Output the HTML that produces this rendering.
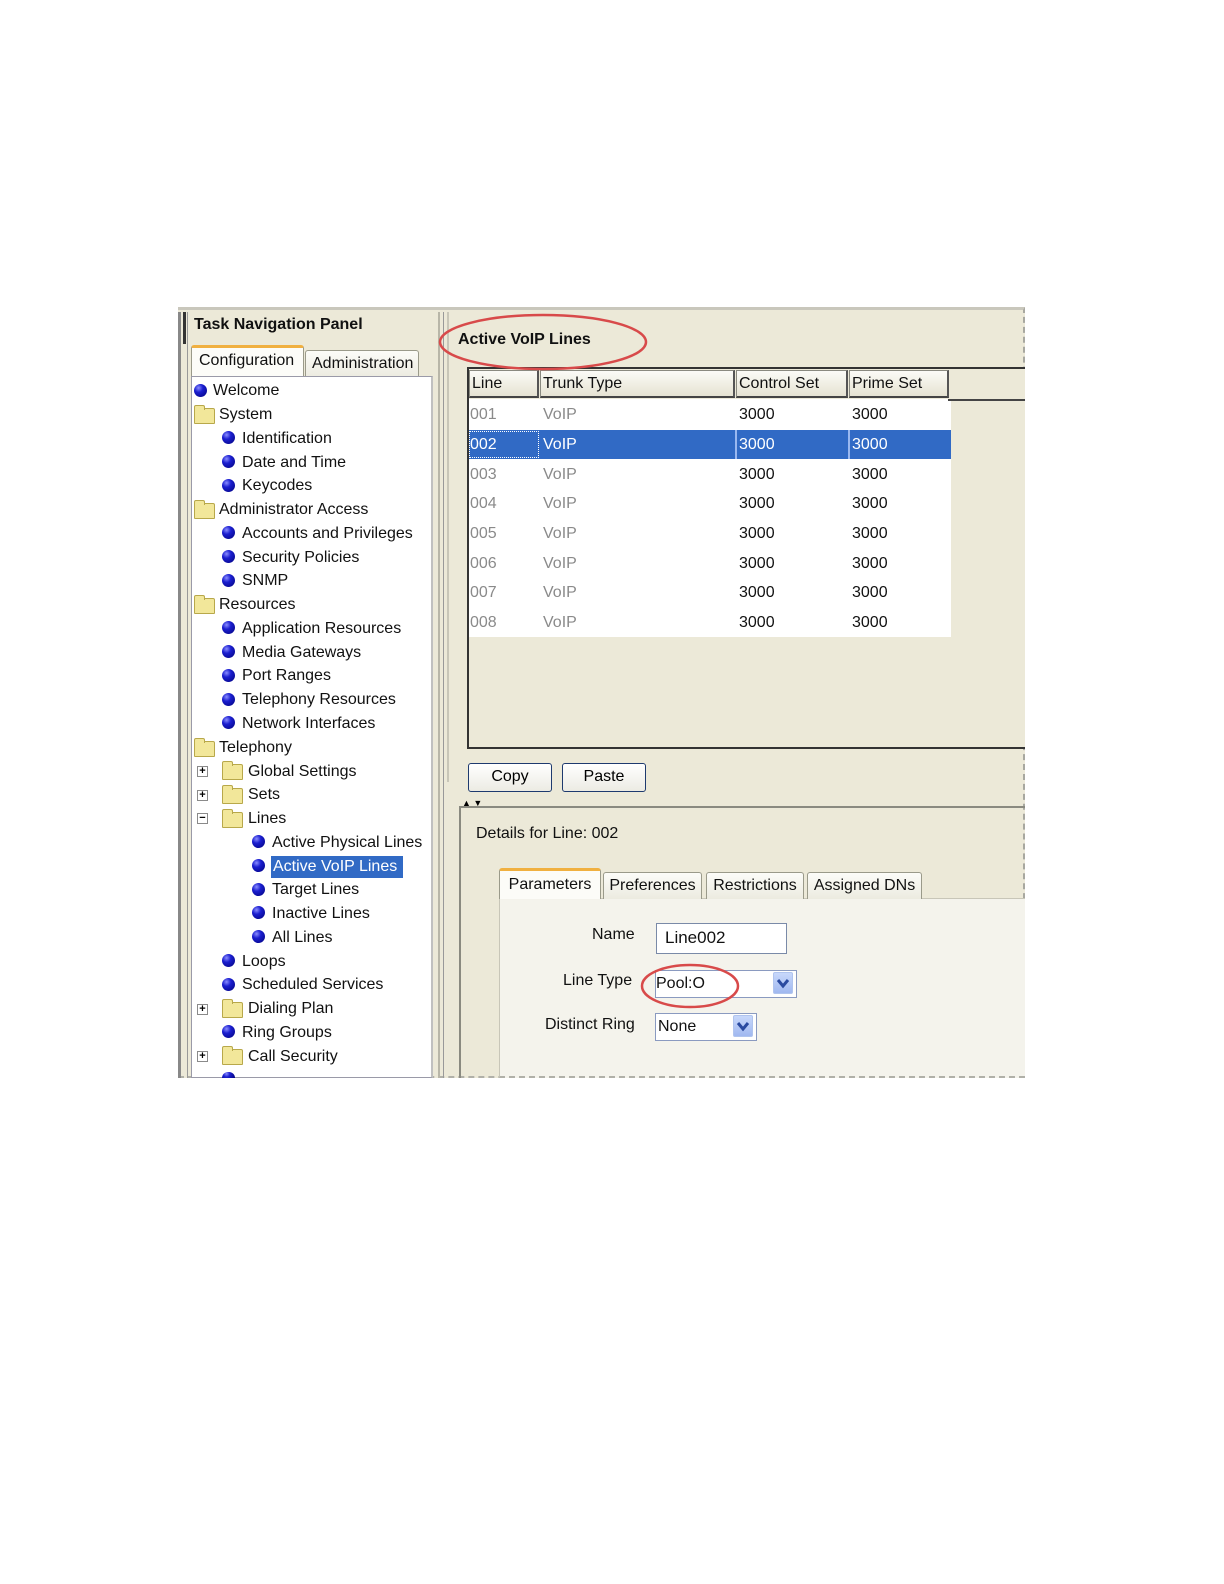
<!DOCTYPE html>
<html><head><meta charset="utf-8"><style>
*{margin:0;padding:0;box-sizing:border-box}
body{width:1224px;height:1584px;background:#fff;position:relative;font-family:"Liberation Sans",sans-serif;overflow:hidden}
.a{position:absolute}
.t{position:absolute;font-size:16px;line-height:20px;color:#111;white-space:nowrap}
.ball{position:absolute;width:13px;height:13px;border-radius:50%;background:radial-gradient(circle at 35% 30%,#8a8cff 0,#1b1fd0 35%,#00007a 100%)}
.fold{position:absolute;width:21px;height:16px;background:#f2e79a;border:1px solid #b8a84a;border-radius:2px 2px 1px 1px}
.fold:before{content:"";position:absolute;left:-1px;top:-4px;width:9px;height:4px;background:#f2e79a;border:1px solid #b8a84a;border-bottom:none;border-radius:2px 2px 0 0}
.pm{position:absolute;width:11px;height:11px;border:1px solid #8a8a8a;background:#fff;font-size:11px;line-height:8px;text-align:center;color:#000;font-weight:bold}
.hd{position:absolute;top:370px;height:28px;background:linear-gradient(#fbfbf7,#e6e3d2);border:1px solid #8a8a80;border-right:2px solid #555;border-bottom:2px solid #444;font-size:16px;line-height:26px;padding-left:2px;color:#111}
.cell{position:absolute;font-size:16px;line-height:20px;color:#111}
.g{color:#8a8a8a}
.tab{position:absolute;top:872px;height:27px;background:linear-gradient(#fcfcf8,#ecebe0);border:1px solid #9a9a8a;border-bottom:none;border-radius:3px 3px 0 0;font-size:16px;line-height:26px;text-align:center;color:#111}
.btn{position:absolute;top:763px;height:29px;border:1.5px solid #1e3a6e;border-radius:3px;background:linear-gradient(#fff,#ecebe3);font-size:16px;line-height:26px;text-align:center}
.dd{position:absolute;width:20px;height:22px;background:linear-gradient(#c8d8fb,#a0b8f0);border:1px solid #b0c4ee;border-radius:2px}
</style></head><body>
<div class="a" style="left:178px;top:307px;width:847px;height:771px;background:#ece9d8;border-top:3px solid #c9c7bc;border-right:2px dashed #a8a8a0;border-bottom:2px dashed #b0b0a8"></div>
<div class="a" style="left:178px;top:312px;width:3px;height:766px;background:#888"></div>
<div class="a" style="left:183px;top:312px;width:3px;height:32px;background:#333"></div>
<div class="a" style="left:187px;top:312px;width:1px;height:766px;background:#999"></div>
<div class="t" style="left:194px;top:315px;font-weight:bold;font-size:16px">Task Navigation Panel</div>
<div class="a" style="left:191px;top:345px;width:113px;height:32px;background:#fcfcf8;border:1px solid #9a9a8a;border-top:3px solid #f0b040;border-radius:3px 3px 0 0"></div>
<div class="t" style="left:199px;top:351px">Configuration</div>
<div class="a" style="left:305px;top:350px;width:114px;height:27px;background:linear-gradient(#fcfcf8,#ecebe0);border:1px solid #9a9a8a;border-bottom:none;border-radius:3px 3px 0 0"></div>
<div class="t" style="left:312px;top:354px">Administration</div>
<div class="a" style="left:191px;top:376px;width:242px;height:702px;background:#fff;border:1px solid #9a9aa8;border-right:2px solid #c0c0c0"></div>
<div class="a" style="left:438px;top:312px;width:2px;height:766px;background:#b8b6a8"></div>
<div class="a" style="left:443px;top:312px;width:1px;height:766px;background:#999"></div>

<div class="ball" style="left:194px;top:384px"></div><div class="t" style="left:213px;top:381px">Welcome</div>
<div class="fold" style="left:194px;top:408px"></div><div class="t" style="left:219px;top:405px">System</div>
<div class="ball" style="left:222px;top:431px"></div><div class="t" style="left:242px;top:429px">Identification</div>
<div class="ball" style="left:222px;top:455px"></div><div class="t" style="left:242px;top:453px">Date and Time</div>
<div class="ball" style="left:222px;top:479px"></div><div class="t" style="left:242px;top:476px">Keycodes</div>
<div class="fold" style="left:194px;top:503px"></div><div class="t" style="left:219px;top:500px">Administrator Access</div>
<div class="ball" style="left:222px;top:526px"></div><div class="t" style="left:242px;top:524px">Accounts and Privileges</div>
<div class="ball" style="left:222px;top:550px"></div><div class="t" style="left:242px;top:548px">Security Policies</div>
<div class="ball" style="left:222px;top:574px"></div><div class="t" style="left:242px;top:571px">SNMP</div>
<div class="fold" style="left:194px;top:598px"></div><div class="t" style="left:219px;top:595px">Resources</div>
<div class="ball" style="left:222px;top:621px"></div><div class="t" style="left:242px;top:619px">Application Resources</div>
<div class="ball" style="left:222px;top:645px"></div><div class="t" style="left:242px;top:643px">Media Gateways</div>
<div class="ball" style="left:222px;top:669px"></div><div class="t" style="left:242px;top:666px">Port Ranges</div>
<div class="ball" style="left:222px;top:693px"></div><div class="t" style="left:242px;top:690px">Telephony Resources</div>
<div class="ball" style="left:222px;top:716px"></div><div class="t" style="left:242px;top:714px">Network Interfaces</div>
<div class="fold" style="left:194px;top:741px"></div><div class="t" style="left:219px;top:738px">Telephony</div>
<div class="pm" style="left:197px;top:766px">+</div><div class="fold" style="left:222px;top:764px"></div><div class="t" style="left:248px;top:762px">Global Settings</div>
<div class="pm" style="left:197px;top:790px">+</div><div class="fold" style="left:222px;top:788px"></div><div class="t" style="left:248px;top:785px">Sets</div>
<div class="pm" style="left:197px;top:813px">−</div><div class="fold" style="left:222px;top:812px"></div><div class="t" style="left:248px;top:809px">Lines</div>
<div class="ball" style="left:252px;top:835px"></div><div class="t" style="left:272px;top:833px">Active Physical Lines</div>
<div class="ball" style="left:252px;top:859px"></div><div class="a" style="left:271px;top:856px;width:132px;height:22px;background:#316ac5"></div><div class="t" style="left:273px;top:857px;color:#fff">Active VoIP Lines</div>
<div class="ball" style="left:252px;top:883px"></div><div class="t" style="left:272px;top:880px">Target Lines</div>
<div class="ball" style="left:252px;top:906px"></div><div class="t" style="left:272px;top:904px">Inactive Lines</div>
<div class="ball" style="left:252px;top:930px"></div><div class="t" style="left:272px;top:928px">All Lines</div>
<div class="ball" style="left:222px;top:954px"></div><div class="t" style="left:242px;top:952px">Loops</div>
<div class="ball" style="left:222px;top:978px"></div><div class="t" style="left:242px;top:975px">Scheduled Services</div>
<div class="pm" style="left:197px;top:1004px">+</div><div class="fold" style="left:222px;top:1002px"></div><div class="t" style="left:248px;top:999px">Dialing Plan</div>
<div class="ball" style="left:222px;top:1025px"></div><div class="t" style="left:242px;top:1023px">Ring Groups</div>
<div class="pm" style="left:197px;top:1051px">+</div><div class="fold" style="left:222px;top:1049px"></div><div class="t" style="left:248px;top:1047px">Call Security</div>
<div class="ball" style="left:222px;top:1072px;height:6px;border-radius:7px 7px 0 0"></div>

<div class="a" style="left:447px;top:312px;width:2px;height:470px;background:#c8c6b8"></div>
<div class="t" style="left:458px;top:330px;font-weight:bold;font-size:16px">Active VoIP Lines</div>
<div class="a" style="left:467px;top:367px;width:558px;height:382px;border:2px solid #333;border-right:none;background:#ece9d8"></div>
<div class="a" style="left:469px;top:399px;width:482px;height:238px;background:#fff"></div>
<div class="a" style="left:948px;top:399px;width:77px;height:2px;background:#444"></div>
<div class="hd" style="left:469px;width:70px">Line</div>
<div class="hd" style="left:540px;width:195px">Trunk Type</div>
<div class="hd" style="left:736px;width:112px">Control Set</div>
<div class="hd" style="left:849px;width:100px">Prime Set</div>
<div class="a" style="left:469px;top:430px;width:482px;height:29px;background:#316ac5"></div>
<div class="a" style="left:469px;top:431px;width:70px;height:27px;border:1px dotted #fff"></div>
<div class="a" style="left:735px;top:430px;width:2px;height:29px;background:#9ab8f0"></div>
<div class="a" style="left:848px;top:430px;width:2px;height:29px;background:#9ab8f0"></div>

<div class="cell g" style="left:470px;top:405px">001</div><div class="cell g" style="left:543px;top:405px">VoIP</div><div class="cell" style="left:739px;top:405px">3000</div><div class="cell" style="left:852px;top:405px">3000</div>
<div class="cell" style="left:470px;top:435px;color:#fff">002</div><div class="cell" style="left:543px;top:435px;color:#fff">VoIP</div><div class="cell" style="left:739px;top:435px;color:#fff">3000</div><div class="cell" style="left:852px;top:435px;color:#fff">3000</div>
<div class="cell g" style="left:470px;top:465px">003</div><div class="cell g" style="left:543px;top:465px">VoIP</div><div class="cell" style="left:739px;top:465px">3000</div><div class="cell" style="left:852px;top:465px">3000</div>
<div class="cell g" style="left:470px;top:494px">004</div><div class="cell g" style="left:543px;top:494px">VoIP</div><div class="cell" style="left:739px;top:494px">3000</div><div class="cell" style="left:852px;top:494px">3000</div>
<div class="cell g" style="left:470px;top:524px">005</div><div class="cell g" style="left:543px;top:524px">VoIP</div><div class="cell" style="left:739px;top:524px">3000</div><div class="cell" style="left:852px;top:524px">3000</div>
<div class="cell g" style="left:470px;top:554px">006</div><div class="cell g" style="left:543px;top:554px">VoIP</div><div class="cell" style="left:739px;top:554px">3000</div><div class="cell" style="left:852px;top:554px">3000</div>
<div class="cell g" style="left:470px;top:583px">007</div><div class="cell g" style="left:543px;top:583px">VoIP</div><div class="cell" style="left:739px;top:583px">3000</div><div class="cell" style="left:852px;top:583px">3000</div>
<div class="cell g" style="left:470px;top:613px">008</div><div class="cell g" style="left:543px;top:613px">VoIP</div><div class="cell" style="left:739px;top:613px">3000</div><div class="cell" style="left:852px;top:613px">3000</div>

<div class="btn" style="left:468px;width:84px">Copy</div>
<div class="btn" style="left:562px;width:84px">Paste</div>
<div class="a" style="left:462px;top:799px;font-size:9px;line-height:9px">▲ ▼</div>

<div class="a" style="left:459px;top:806px;width:566px;height:272px;border-top:2px solid #8a8a80;border-left:2px solid #8a8a80"></div>
<div class="t" style="left:476px;top:824px">Details for Line: 002</div>
<div class="a" style="left:499px;top:898px;width:526px;height:180px;background:#f4f3ec;border-top:1px solid #c8c6b8;border-left:1px solid #c8c6b8;border-bottom:2px dashed #b0b0a8"></div>
<div class="tab" style="left:499px;top:868px;width:102px;height:31px;background:#fcfcf8;border-top:3px solid #f0b040;line-height:28px">Parameters</div>
<div class="tab" style="left:603px;width:99px">Preferences</div>
<div class="tab" style="left:706px;width:98px">Restrictions</div>
<div class="tab" style="left:807px;width:115px">Assigned DNs</div>

<div class="t" style="left:592px;top:925px">Name</div>
<div class="a" style="left:656px;top:923px;width:131px;height:31px;background:#fff;border:1px solid #7a8aa8"></div>
<div class="t" style="left:665px;top:928px;font-size:17px">Line002</div>
<div class="t" style="left:563px;top:971px">Line Type</div>
<div class="a" style="left:655px;top:970px;width:142px;height:28px;background:#fff;border:1px solid #8a9ac0"></div>
<div class="dd" style="left:773px;top:972px"></div>
<div class="t" style="left:656px;top:974px">Pool:O</div>
<div class="t" style="left:545px;top:1015px">Distinct Ring</div>
<div class="a" style="left:655px;top:1013px;width:102px;height:28px;background:#fff;border:1px solid #8a9ac0"></div>
<div class="dd" style="left:733px;top:1015px"></div>
<div class="t" style="left:658px;top:1017px">None</div>

<svg class="a" style="left:0;top:0" width="1224" height="1584">
<path d="M778 980 L783 986 L788 980" fill="none" stroke="#2a4aa0" stroke-width="3"/>
<path d="M738 1023 L743 1029 L748 1023" fill="none" stroke="#2a4aa0" stroke-width="3"/>
<ellipse cx="543" cy="342" rx="103" ry="27" fill="none" stroke="#d84a4a" stroke-width="2.5"/>
<ellipse cx="690" cy="986" rx="48" ry="21" fill="none" stroke="#d84a4a" stroke-width="2.5"/>
</svg>
</body></html>
